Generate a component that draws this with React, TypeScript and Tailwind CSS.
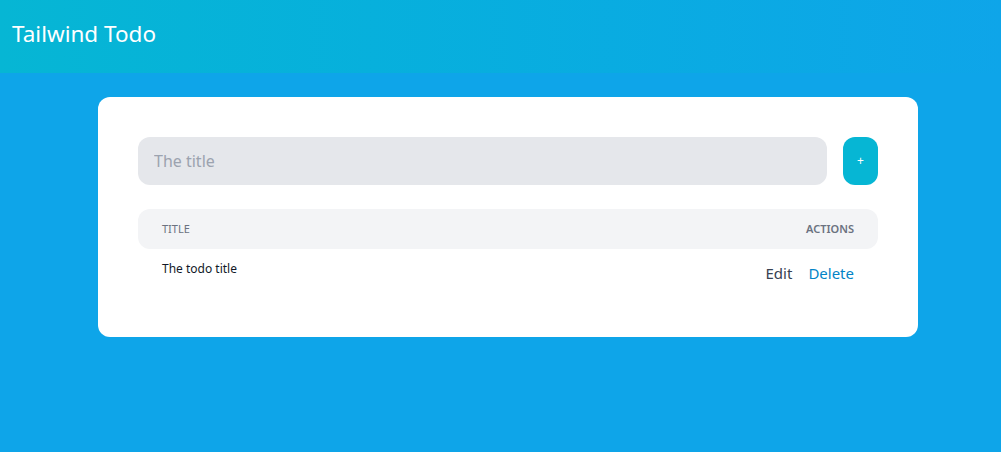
import React from "react";

export default function App() {
  return (
    <div className="min-h-[452px] bg-[#0ea5e9] font-['Noto_Sans','Open_Sans',sans-serif]">
      <header className="h-[73px] bg-gradient-to-r from-[#06b6d4] to-[#0ea5e9] flex items-center px-3">
        <h1 className="text-[22.5px] text-white leading-none -mt-[4px]">Tailwind Todo</h1>
      </header>
      <div className="pt-6">
        <div className="w-[820px] ml-[98px] bg-white rounded-xl px-10 pt-10 pb-[40px]">
          <div className="flex gap-4">
            <input
              className="flex-1 h-12 rounded-xl bg-[#e5e7eb] px-4 text-base text-gray-700 placeholder:text-[#9ca3af] outline-none"
              placeholder="The title"
            />
            <button className="w-[35px] h-12 rounded-xl bg-[#06b6d4] text-white text-xs">+</button>
          </div>
          <div className="mt-6">
            <div className="h-10 rounded-xl bg-[#f3f4f6] flex items-center justify-between px-6 text-[11px] text-[#6b7280]">
              <span>TITLE</span>
              <span className="font-semibold">ACTIONS</span>
            </div>
            <div className="flex items-start justify-between px-6 pt-[12px] h-[48px]">
              <span className="text-xs text-[#111827]">The todo title</span>
              <div className="flex gap-4 text-[15px] mt-[1px]">
                <button className="text-[#374151]">Edit</button>
                <button className="text-[#0284c7]">Delete</button>
              </div>
            </div>
          </div>
        </div>
      </div>
    </div>
  );
}
